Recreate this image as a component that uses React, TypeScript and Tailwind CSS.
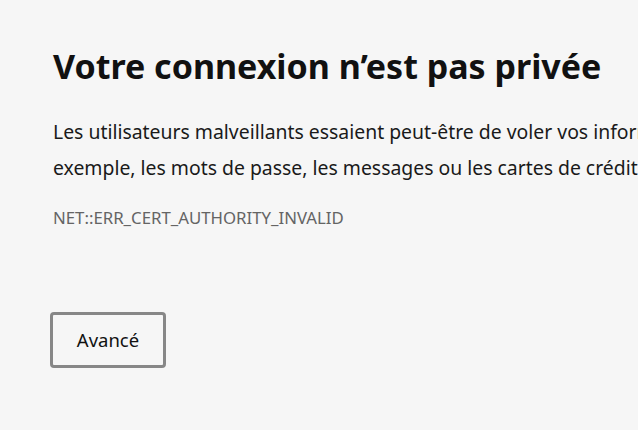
export default function App() {
  return (
    <main
      className="h-[430px] w-full overflow-hidden bg-[#f6f6f6] text-[#1a1a1a]"
      style={{ fontFamily: '"Noto Sans", "Open Sans", sans-serif' }}
    >
      <div className="w-[760px] pl-[50px] pt-[40px]">
        <h1 className="pl-[3px] text-[34px] font-bold leading-[52px] text-[#111]">
          Votre connexion n’est pas privée
        </h1>
        <p className="mt-[22px] pl-[3px] text-[19.4px] leading-[36px] whitespace-nowrap">
          Les utilisateurs malveillants essaient peut-être de voler vos informations sur
          <br />
          exemple, les mots de passe, les messages ou les cartes de crédit).
        </p>
        <div className="mt-[20px] pl-[3px] text-[16.8px] leading-[24px] text-[#646464]">
          NET::ERR_CERT_AUTHORITY_INVALID
        </div>
        <button className="mt-[82px] h-[56px] w-[116px] rounded-[4px] border-[3px] border-[#878787] bg-[#f6f6f6] text-[18.5px] text-[#111]">
          Avancé
        </button>
      </div>
    </main>
  );
}
